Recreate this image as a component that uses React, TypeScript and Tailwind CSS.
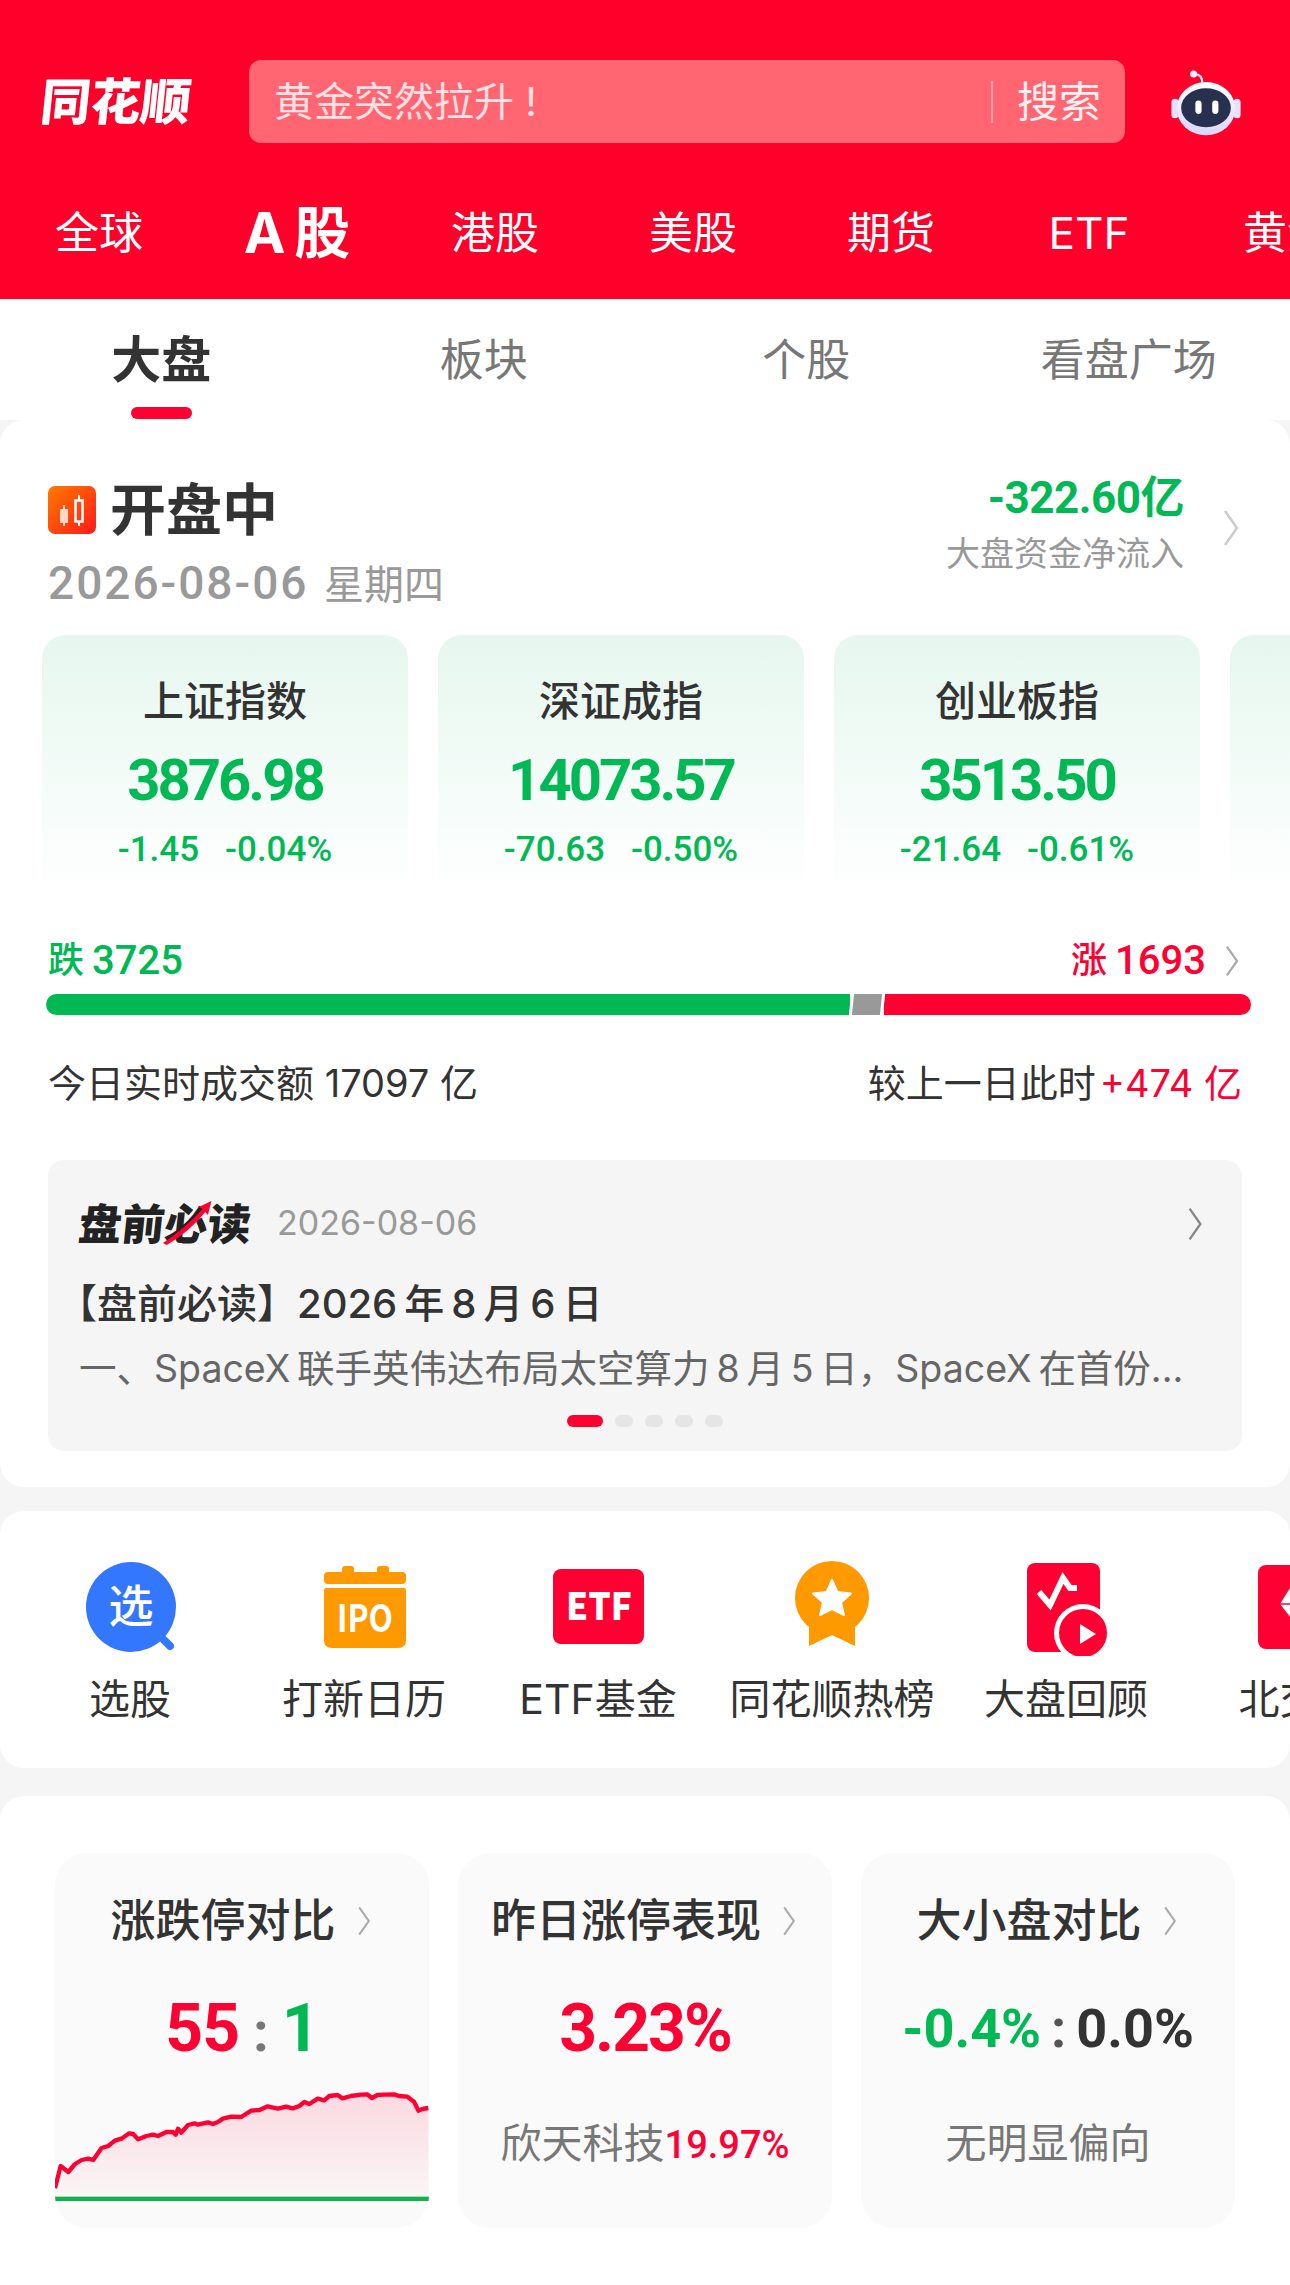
const chartPts = "15,385 32,318 55,336 75,312 95,300 115,296 130,300 155,264 175,258 195,242 215,236 238,220 250,222 265,238 290,228 310,224 325,228 350,216 370,216 378,224 385,206 395,218 415,195 435,190 445,194 475,187 490,192 505,186 520,176 545,170 575,171 605,152 630,150 655,139 685,146 710,140 730,145 750,138 765,126 780,132 805,116 825,121 840,108 865,105 880,115 905,108 935,104 955,103 968,114 985,105 1005,104 1035,103 1050,108 1075,110 1095,125 1108,152 1120,147 1138,144";

const navs = ["全球", "A\u2009股", "港股", "美股", "期货", "ETF", "黄金"];
const tabs = ["大盘", "板块", "个股", "看盘广场"];

const indexes = [
  { name: "上证指数", value: "3876.98", diff: "-1.45", pct: "-0.04%" },
  { name: "深证成指", value: "14073.57", diff: "-70.63", pct: "-0.50%" },
  { name: "创业板指", value: "3513.50", diff: "-21.64", pct: "-0.61%" },
  { name: "", value: "", diff: "", pct: "" },
];

function Chevron({ className }: { className: string }) {
  return (
    <svg viewBox="0 0 20 40" fill="none" className={className}>
      <polyline points="4,3 16,20 4,37" stroke="currentColor" strokeWidth="2.6" />
    </svg>
  );
}

function Robot() {
  return (
    <svg viewBox="0 0 90 80" className="w-[80px] h-[71px]">
      <defs>
        <linearGradient id="shell" x1="0" y1="0" x2="0" y2="1">
          <stop offset="0" stopColor="#ffffff" />
          <stop offset="1" stopColor="#d9d6fb" />
        </linearGradient>
      </defs>
      <path d="M41 20 C41 11 37 9 32 9" fill="none" stroke="#f3eaff" strokeWidth="2.5" />
      <circle cx="31" cy="9" r="4" fill="#f7eeff" />
      <rect x="6" y="37" width="8" height="22" rx="4" fill="#e6e1ff" />
      <rect x="76" y="37" width="8" height="22" rx="4" fill="#e6e1ff" />
      <ellipse cx="45" cy="48" rx="33" ry="30" fill="url(#shell)" />
      <ellipse cx="45" cy="47" rx="28" ry="22" fill="#27304f" />
      <rect x="33" y="39" width="7" height="15" rx="3.5" fill="#fff" />
      <rect x="52" y="39" width="7" height="15" rx="3.5" fill="#fff" />
    </svg>
  );
}

function MenuIcon({ kind }: { kind: string }) {
  const red = "#ff0033";
  const orange = "#ff9900";
  return (
    <svg viewBox="0 0 96 96" className="w-24 h-24">
      {kind === "pick" && (
        <>
          <circle cx="49" cy="47" r="45" fill="#3377ff" />
          <line x1="76" y1="74" x2="88" y2="86" stroke="#3377ff" strokeWidth="8" strokeLinecap="round" />
          <text x="49" y="63" textAnchor="middle" fontSize="45" fontWeight="500" fill="#fff" fontFamily="Noto Sans CJK SC">选</text>
        </>
      )}
      {kind === "ipo" && (
        <>
          <rect x="26" y="6" width="12" height="12" rx="3" fill={orange} />
          <rect x="61" y="6" width="12" height="12" rx="3" fill={orange} />
          <rect x="8" y="12" width="82" height="12" rx="4" fill={orange} />
          <path d="M8 30 Q8 28 10 28 H88 Q90 28 90 30 V80 Q90 88 82 88 H16 Q8 88 8 80 Z" fill={orange} />
          <text x="21" y="72" fontSize="38" fontWeight="700" fill="#fff" fontFamily="Noto Sans CJK SC" textLength="56" lengthAdjust="spacingAndGlyphs">IPO</text>
        </>
      )}
      {kind === "etf" && (
        <>
          <rect x="3" y="9" width="91" height="75" rx="8" fill={red} />
          <text x="16" y="60" fontSize="38" fontWeight="800" fill="#fff" fontFamily="Noto Sans CJK SC" textLength="66" lengthAdjust="spacingAndGlyphs">ETF</text>
        </>
      )}
      {kind === "medal" && (
        <>
          <polygon points="25,58 71,58 71,86 48,75 25,86" fill={orange} />
          <circle cx="48" cy="38" r="37" fill={orange} />
          <polygon points="48,20 53.5,32 67,33.5 57,42.5 60,55 48,49 36,55 39,42.5 29,33.5 42.5,32" fill="#fff" stroke="#fff" strokeWidth="2" strokeLinejoin="round" />
        </>
      )}
      {kind === "review" && (
        <>
          <rect x="9" y="3" width="73" height="89" rx="8" fill={red} />
          <polyline points="21,32 32,45 45,18 52,28 59,28" fill="none" stroke="#fff" strokeWidth="6" />
          <circle cx="65" cy="73" r="29" fill="#fff" />
          <circle cx="65" cy="73" r="24" fill={red} />
          <polygon points="62,64 78,74 62,84" fill="#fff" />
        </>
      )}
      {kind === "gem" && (
        <>
          <rect x="6" y="5" width="84" height="84" rx="8" fill={red} />
          <polygon points="38,28 62,28 72,44 50,72 28,44" fill="#fff" />
          <line x1="28" y1="44" x2="50" y2="44" stroke={red} strokeWidth="1.5" />
        </>
      )}
    </svg>
  );
}

const menus = [
  { kind: "pick", label: "选股" },
  { kind: "ipo", label: "打新日历" },
  { kind: "etf", label: "ETF基金" },
  { kind: "medal", label: "同花顺热榜" },
  { kind: "review", label: "大盘回顾" },
  { kind: "gem", label: "北交所" },
];

export default function App() {
  return (
    <div className="w-[1290px] h-[2285px] overflow-hidden flex flex-col bg-[#f5f5f5] text-[#333333] font-['Inter','Noto_Sans_CJK_SC',sans-serif]">
      {/* Header */}
      <div className="h-[299px] bg-[#ff002b] pt-[60px] text-white shrink-0 overflow-hidden">
        <div className="flex items-center h-[83px] pl-[41px]">
          <div className="w-[151px] text-[50px] leading-[50px] font-black -skew-x-6 whitespace-nowrap">同花顺</div>
          <div className="ml-[57px] w-[876px] h-[83px] rounded-xl bg-[#ff6672] flex items-center pl-[25px]">
            <span className="text-[40px] text-white/80 flex-1">黄金突然拉升 !</span>
            <span className="w-[2px] h-[42px] bg-white/40"></span>
            <span className="text-[42px] ml-[24px] mr-[24px] text-white/90">搜索</span>
          </div>
          <div className="ml-[41px]">
            <Robot />
          </div>
        </div>
        <div className="flex mt-[55px] h-[70px] items-center">
          {navs.map((n, i) => (
            <div key={n} className={"w-[198px] shrink-0 text-center whitespace-nowrap " + (i === 1 ? "text-[56px] leading-[70px] font-bold" : "text-[44px] leading-[70px]")}>
              {n}
            </div>
          ))}
        </div>
      </div>

      {/* Tabs */}
      <div className="h-[121px] bg-white grid grid-cols-4 pt-[37px] shrink-0">
        {tabs.map((t, i) => (
          <div key={t} className="flex flex-col items-center">
            <span className={i === 0 ? "text-[50px] leading-[48px] font-bold text-[#333333]" : "text-[44px] leading-[48px] text-[#777777]"}>{t}</span>
            {i === 0 && <span className="mt-[23px] w-[61px] h-3 rounded-full bg-[#ff0033]"></span>}
          </div>
        ))}
      </div>

      {/* Market card */}
      <div className="bg-white rounded-[24px] h-[1067px] shrink-0 overflow-hidden">
        <div className="flex justify-between pt-[54px] pl-[48px] pr-[48px]">
          <div>
            <div className="flex items-center h-[60px] mt-[6px]">
              <svg viewBox="0 0 48 48" className="w-12 h-12">
                <defs>
                  <linearGradient id="candle" x1="0" y1="0" x2="1" y2="1">
                    <stop offset="0" stopColor="#ff7a00" />
                    <stop offset="1" stopColor="#ff1a1a" />
                  </linearGradient>
                </defs>
                <rect width="48" height="48" rx="7" fill="url(#candle)" />
                <rect x="12" y="23" width="8" height="14" fill="#ffd9c8" />
                <line x1="16" y1="19" x2="16" y2="40" stroke="#ffd9c8" strokeWidth="2" />
                <rect x="27.5" y="14.5" width="7" height="21" fill="none" stroke="#fff" strokeWidth="2.5" />
                <line x1="31" y1="9" x2="31" y2="40" stroke="#fff" strokeWidth="2" strokeDasharray="5 22" />
              </svg>
              <span className="ml-[14px] text-[56px] leading-[60px] font-bold text-[#333333]">开盘中</span>
            </div>
            <div className="mt-[18px] flex items-baseline h-[50px] leading-[50px] text-[#999999]">
              <span className="text-[46px] font-medium font-['Roboto',sans-serif] tracking-[2px] w-[276px]">2026-08-06</span>
              <span className="text-[40px]">星期四</span>
            </div>
          </div>
          <div className="flex">
            <div className="text-right mr-[36px]">
              <div className="text-[44px] leading-[48px] font-bold text-[#00b954] whitespace-nowrap font-['Roboto','Noto_Sans_CJK_SC',sans-serif] tracking-[-0.5px]">-322.60亿</div>
              <div className="mt-[12px] text-[34px] leading-[40px] text-[#999999]">大盘资金净流入</div>
            </div>
            <Chevron className="w-[22px] h-[40px] mt-[34px] text-[#cccccc]" />
          </div>
        </div>

        {/* Index cards */}
        <div className="flex gap-[30px] pl-[42px] mt-[27px]">
          {indexes.map((x, i) => (
            <div key={i} className="w-[366px] h-[265px] shrink-0 rounded-[24px] bg-gradient-to-b from-[#e6f7ef] to-white pt-[41px] text-center">
              <div className="text-[41px] leading-[50px] font-medium text-[#333333]">{x.name}</div>
              <div className="mt-[19px] text-[58px] leading-[70px] font-bold text-[#00b954] font-['Roboto',sans-serif] tracking-[-3px]">{x.value}</div>
              <div className="mt-[15px] text-[35px] leading-[40px] font-medium text-[#00b954] font-['Roboto',sans-serif] flex justify-center gap-[26px]">
                <span>{x.diff}</span>
                <span>{x.pct}</span>
              </div>
            </div>
          ))}
        </div>

        {/* Rise and fall */}
        <div className="mt-[37px] pl-[48px] pr-[48px] h-[48px] flex items-center justify-between text-[40px] leading-[48px] font-['Roboto','Noto_Sans_CJK_SC',sans-serif]">
          <span className="flex items-center text-[#00b954] font-medium">
            <span className="text-[36px]">跌</span>
            <span className="ml-[8px]">3725</span>
          </span>
          <span className="flex items-center text-[#ff0033] font-medium">
            <span className="text-[36px]">涨</span>
            <span className="ml-[8px]">1693</span>
            <Chevron className="ml-[16px] w-[20px] h-[34px] text-[#aaaaaa]" />
          </span>
        </div>
        <div className="mt-[9px] ml-[46px] w-[1205px] h-[21px] rounded-full overflow-hidden flex">
          <div className="w-[804px] bg-[#00b954]"></div>
          <div className="w-[34px] bg-[#999999] border-x-[3px] border-white -skew-x-6"></div>
          <div className="flex-1 bg-[#ff0033]"></div>
        </div>
        <div className="mt-[44px] pl-[48px] pr-[48px] flex justify-between text-[38px] leading-[48px] text-[#333333]">
          <span>今日实时成交额 17097 亿</span>
          <span>
            较上一日此时<span className="ml-[4px] text-[#ff0033]">+474 亿</span>
          </span>
        </div>

        {/* Morning brief */}
        <div className="mt-[53px] ml-[48px] w-[1194px] h-[291px] rounded-2xl bg-[#f5f5f5] pt-[39px] px-[31px]">
          <div className="flex items-center h-[50px]">
            <span className="relative inline-block text-[43px] leading-[50px] font-black text-[#222222] whitespace-nowrap -skew-x-6">
              盘前必读
              <svg viewBox="0 0 50 44" className="absolute left-[84px] top-[2px] w-[50px] h-[44px]">
                <path d="M2 42 Q24 26 38 8 L34 6 L46 0 L44 14 L41 11 Q28 30 6 44 Z" fill="#ff0033" />
              </svg>
            </span>
            <span className="ml-[26px] -mt-[3px] text-[34px] text-[#999999] flex-1">2026-08-06</span>
            <Chevron className="w-[20px] h-[36px] text-[#888888] mr-[6px]" />
          </div>
          <div className="mt-[30px] -ml-[22px] text-[40px] leading-[50px] font-medium text-[#333333] whitespace-nowrap">【盘前必读】2026{"\u2009"}年{"\u2009"}8{"\u2009"}月{"\u2009"}6{"\u2009"}日</div>
          <div className="mt-[16px] text-[37.5px] leading-[48px] text-[#666666] whitespace-nowrap">
            一、SpaceX{"\u2009"}联手英伟达布局太空算力{"\u2009"}8{"\u2009"}月{"\u2009"}5{"\u2009"}日，SpaceX{"\u2009"}在首份...
          </div>
          <div className="mt-[22px] flex justify-center gap-[12px]">
            <span className="w-[36px] h-3 rounded-full bg-[#ff0033]"></span>
            <span className="w-[18px] h-3 rounded-full bg-[#e5e5e5]"></span>
            <span className="w-[18px] h-3 rounded-full bg-[#e5e5e5]"></span>
            <span className="w-[18px] h-3 rounded-full bg-[#e5e5e5]"></span>
            <span className="w-[18px] h-3 rounded-full bg-[#e5e5e5]"></span>
          </div>
        </div>
      </div>

      {/* Shortcuts */}
      <div className="mt-[24px] h-[257px] bg-white rounded-[24px] flex pl-[13px] pt-[49px] shrink-0 overflow-hidden">
        {menus.map((m) => (
          <div key={m.label} className="w-[234px] shrink-0 flex flex-col items-center">
            <MenuIcon kind={m.kind} />
            <span className="mt-[19px] text-[41px] leading-[48px] text-[#333333] whitespace-nowrap">{m.label}</span>
          </div>
        ))}
      </div>

      {/* Comparison cards */}
      <div className="mt-[28px] flex-1 bg-white rounded-t-[24px] pt-[57px] px-[55px]">
        <div className="grid grid-cols-3 gap-[29px]">
          <div className="h-[375px] rounded-[32px] bg-[#fafafa] overflow-hidden pt-[44px]">
            <div className="flex items-center justify-center text-[45px] leading-[48px] font-medium text-[#333333]">
              涨跌停对比
              <Chevron className="ml-[18px] w-[20px] h-[32px] text-[#aaaaaa]" />
            </div>
            <div className="mt-[44px] text-center text-[66px] leading-[80px] font-bold font-['Roboto',sans-serif] tracking-[-1px]">
              <span className="text-[#ff0033]">55</span>
              <span className="text-[#777777] mx-[14px] text-[56px]">:</span>
              <span className="text-[#00b954]">1</span>
            </div>
            <svg viewBox="15 90 1125 411" preserveAspectRatio="none" className="mt-[18px] w-full h-[137px]">
              <defs>
                <linearGradient id="area" x1="0" y1="0" x2="0" y2="1">
                  <stop offset="0" stopColor="#ff0033" stopOpacity="0.13" />
                  <stop offset="1" stopColor="#ff0033" stopOpacity="0.02" />
                </linearGradient>
              </defs>
              <polygon points={chartPts + " 1138,410 15,410"} fill="url(#area)" />
              <polyline points={chartPts} fill="none" stroke="#ff0033" strokeWidth="13" strokeLinejoin="round" />
              <rect x="15" y="410" width="1125" height="13" fill="#10b04a" />
            </svg>
          </div>

          <div className="h-[375px] rounded-[32px] bg-[#fafafa] pt-[44px]">
            <div className="flex items-center justify-center text-[45px] leading-[48px] font-medium text-[#333333]">
              昨日涨停表现
              <Chevron className="ml-[18px] w-[20px] h-[32px] text-[#aaaaaa]" />
            </div>
            <div className="mt-[44px] text-center text-[66px] leading-[80px] font-bold text-[#ff0033] font-['Roboto',sans-serif] tracking-[-2px]">3.23%</div>
            <div className="mt-[50px] text-center text-[41px] leading-[48px] text-[#777777] whitespace-nowrap">
              欣天科技<span className="text-[#ff0033] text-[38px] font-medium font-['Roboto',sans-serif]">19.97%</span>
            </div>
          </div>

          <div className="h-[375px] rounded-[32px] bg-[#fafafa] pt-[44px]">
            <div className="flex items-center justify-center text-[45px] leading-[48px] font-medium text-[#333333]">
              大小盘对比
              <Chevron className="ml-[18px] w-[20px] h-[32px] text-[#aaaaaa]" />
            </div>
            <div className="mt-[44px] text-center text-[54px] leading-[80px] font-bold font-['Roboto',sans-serif] whitespace-nowrap">
              <span className="text-[#00b954]">-0.4%</span>
              <span className="text-[#555555] mx-[10px]">:</span>
              <span className="text-[#333333]">0.0%</span>
            </div>
            <div className="mt-[50px] text-center text-[41px] leading-[48px] text-[#777777]">无明显偏向</div>
          </div>
        </div>
      </div>
    </div>
  );
}
